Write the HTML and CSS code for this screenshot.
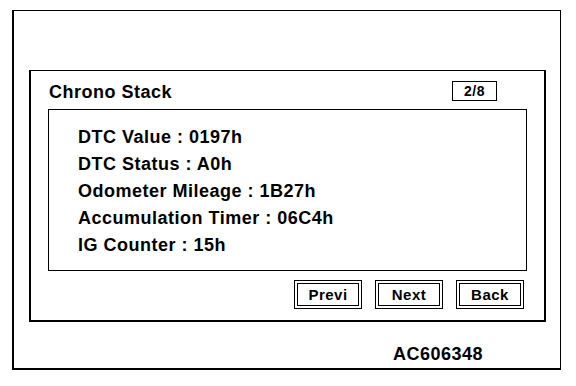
FILE: index.html
```html
<!DOCTYPE html>
<html lang="en">
<head>
    <meta charset="UTF-8">
    <meta name="viewport" content="width=device-width, initial-scale=1.0">
    <title>Chrono Stack</title>
    <link rel="stylesheet" href="styles.css">
</head>
<body>
    <div class="frame">
        <div class="panel">
            <div class="panel-head">
                <h1 class="title">Chrono Stack</h1>
                <span class="page">2/8</span>
            </div>

            <!-- dados do freeze frame -->
            <div class="data">
                <p>DTC Value : 0197h</p>
                <p>DTC Status : A0h</p>
                <p>Odometer Mileage : 1B27h</p>
                <p>Accumulation Timer : 06C4h</p>
                <p>IG Counter : 15h</p>
            </div>

            <div class="buttons">
                <button type="button">Previ</button>
                <button type="button">Next</button>
                <button type="button">Back</button>
            </div>
        </div>

        <div class="code">AC606348</div>
    </div>
</body>
</html>
```

FILE: styles.css
```css
body {
    margin: 0;
    background-color: #fff;
    font-family: "Liberation Sans", Arial, sans-serif;
    font-weight: bold;
    color: #000;
}

.frame {
    box-sizing: border-box;
    width: 549px;
    height: 360px;
    margin: 10px 0 0 12px;
    border-top: 1px solid #000;
    border-right: 1px solid #000;
    border-bottom: 2px solid #000;
    border-left: 2px solid #000;
}

.panel {
    box-sizing: border-box;
    width: 517px;
    height: 252px;
    margin: 59px 0 0 15px;
    border: 2px solid #000;
    border-top-width: 1px;
}

.panel-head {
    display: flex;
    align-items: center;
    justify-content: space-between;
    height: 38px;
    padding: 0 47px 0 18px;
}

.title {
    margin: 0;
    font-size: 18px;
    letter-spacing: 0.5px;
    line-height: 20px;
    margin-top: 3px;
}

.page {
    box-sizing: border-box;
    width: 45px;
    height: 20px;
    border: 1px solid #000;
    font-size: 14px;
    line-height: 18px;
    letter-spacing: 0.5px;
    text-align: center;
    margin-top: 1px;
}

.data {
    box-sizing: border-box;
    height: 162px;
    margin: 0 17px;
    padding: 14px 0 0 29px;
    border: 1px solid #000;
}

.data p {
    margin: 0;
    font-size: 18px;
    line-height: 27px;
    letter-spacing: 0.5px;
}

.buttons {
    display: flex;
    justify-content: flex-end;
    gap: 13px;
    margin-top: 9px;
    padding-right: 20px;
}

button {
    box-sizing: border-box;
    width: 68px;
    height: 29px;
    padding: 0;
    border: 1px solid #000;
    background-color: #fff;
    box-shadow: inset 0 0 0 2px #fff, inset 0 0 0 3px #000;
    font-family: inherit;
    font-weight: bold;
    font-size: 15px;
    letter-spacing: 0.5px;
    color: #000;
}

.code {
    margin: 22px 0 0 379px;
    font-size: 18px;
    line-height: 20px;
    letter-spacing: 0.5px;
}
```
